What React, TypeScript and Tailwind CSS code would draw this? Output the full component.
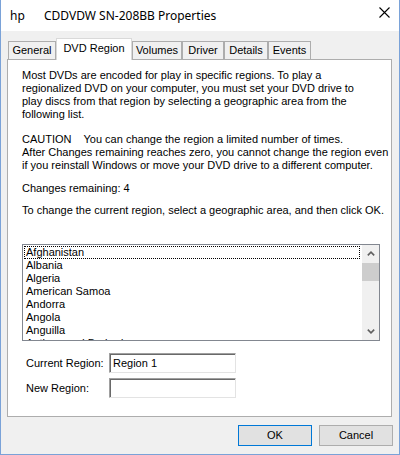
import React from 'react';

const TABS = [
  { label: 'General', width: 'w-[48px]' },
  { label: 'DVD Region', width: 'w-[76px]', selected: true },
  { label: 'Volumes', width: 'w-[50px]' },
  { label: 'Driver', width: 'w-[42px]' },
  { label: 'Details', width: 'w-[44px]' },
  { label: 'Events', width: 'w-[43px]' },
];

const COUNTRIES = [
  'Afghanistan',
  'Albania',
  'Algeria',
  'American Samoa',
  'Andorra',
  'Angola',
  'Anguilla',
  'Antigua and Barbuda',
];

function Chevron({ down = false }: { down?: boolean }) {
  return (
    <svg width="8" height="5" viewBox="0 0 8 5" className={down ? 'rotate-180' : ''}>
      <path d="M0.8 4.4 L4 1.2 L7.2 4.4" fill="none" stroke="#606060" strokeWidth={1.6} />
    </svg>
  );
}

function TextBox({ value }: { value?: string }) {
  return (
    <div className="w-[127px] h-[20px] bg-white border border-t-[#a0a0a0] border-l-[#a0a0a0] border-r-[#e3e3e3] border-b-[#e3e3e3] shadow-[inset_1px_1px_0_#696969] flex items-center pl-[3px] leading-[13px]">
      {value}
    </div>
  );
}

export default function App() {
  return (
    <div
      className="w-[400px] h-[455px] bg-[#f0f0f0] border-x border-b border-[#7aa2d8] flex flex-col text-[11px] text-black overflow-hidden"
      style={{ fontFamily: '"Liberation Sans", Arial, sans-serif' }}
    >
      {/* title bar */}
      <div className="h-[31px] shrink-0 bg-white flex items-center text-[12px] relative" style={{ fontFamily: '"Noto Sans", "Liberation Sans", sans-serif' }}>
        <span className="ml-[9px] w-[34px]">hp</span>
        <span>CDDVDW SN-208BB Properties</span>
        <svg className="absolute left-[378px] top-[7px]" width="11" height="11" viewBox="0 0 11 11">
          <path d="M0.5 0.5 L10.5 10.5 M10.5 0.5 L0.5 10.5" stroke="#000" strokeWidth={1.1} />
        </svg>
      </div>

      {/* tabs */}
      <div className="mt-[7px] h-[21px] shrink-0 flex items-end pl-[7px] relative z-10">
        {TABS.map((tab) =>
          tab.selected ? (
            <div
              key={tab.label}
              className={`${tab.width} h-[22px] -mb-px bg-white border border-b-0 border-[#d9d9d9] flex items-start justify-center pt-[3px] leading-[13px]`}
            >
              {tab.label}
            </div>
          ) : (
            <div
              key={tab.label}
              className={`${tab.width} h-[18px] bg-[#f0f0f0] border border-b-0 border-[#adadad] flex items-start justify-center pt-[2px] leading-[13px]`}
            >
              {tab.label}
            </div>
          )
        )}
      </div>

      {/* panel */}
      <div className="ml-[6px] w-[385px] h-[358px] shrink-0 bg-white border border-[#adadad] flex flex-col leading-[13px] whitespace-nowrap">
        <div className="pl-[14px] pt-[9px]">
          Most DVDs are encoded for play in specific regions. To play a
          <br />
          regionalized DVD on your computer, you must set your DVD drive to
          <br />
          play discs from that region by selecting a geographic area from the
          <br />
          following list.
        </div>
        <div className="pl-[14px] mt-[12px]">
          CAUTION<span className="ml-[12px]">You can change the region a limited number of times.</span>
          <br />
          After Changes remaining reaches zero, you cannot change the region even
          <br />
          if you reinstall Windows or move your DVD drive to a different computer.
        </div>
        <div className="pl-[14px] mt-[10px]">Changes remaining: 4</div>
        <div className="pl-[14px] mt-[9px]">To change the current region, select a geographic area, and then click OK.</div>

        {/* list box */}
        <div className="ml-[14px] mt-[27px] w-[358px] h-[97px] border border-[#828790] flex">
          <div className="flex-1 overflow-hidden pt-px">
            {COUNTRIES.map((name, i) => (
              <div
                key={name}
                className={`ml-px mr-[2px] h-[13px] pl-px leading-[11px] border ${
                  i === 0 ? 'border-dotted border-black' : 'border-transparent'
                }`}
              >
                {name}
              </div>
            ))}
          </div>
          <div className="w-[17px] bg-[#f0f0f0] flex flex-col">
            <div className="h-[17px] flex items-center justify-center">
              <Chevron />
            </div>
            <div className="h-[18px] mt-px bg-[#cdcdcd]" />
            <div className="flex-1" />
            <div className="h-[17px] flex items-center justify-center">
              <Chevron down />
            </div>
          </div>
        </div>

        {/* region fields */}
        <div className="mt-[12px] flex items-center pl-[18px]">
          <span className="w-[83px]">Current Region:</span>
          <TextBox value="Region 1" />
        </div>
        <div className="mt-[5px] flex items-center pl-[18px]">
          <span className="w-[83px]">New Region:</span>
          <TextBox />
        </div>
      </div>

      {/* buttons */}
      <div className="mt-[8px] flex justify-end gap-[7px] pr-[6px]">
        <button className="w-[74px] h-[21px] bg-[#e1e1e1] border border-[#0078d7] leading-[13px]">OK</button>
        <button className="w-[74px] h-[21px] bg-[#e1e1e1] border border-[#adadad] leading-[13px]">Cancel</button>
      </div>
    </div>
  );
}
